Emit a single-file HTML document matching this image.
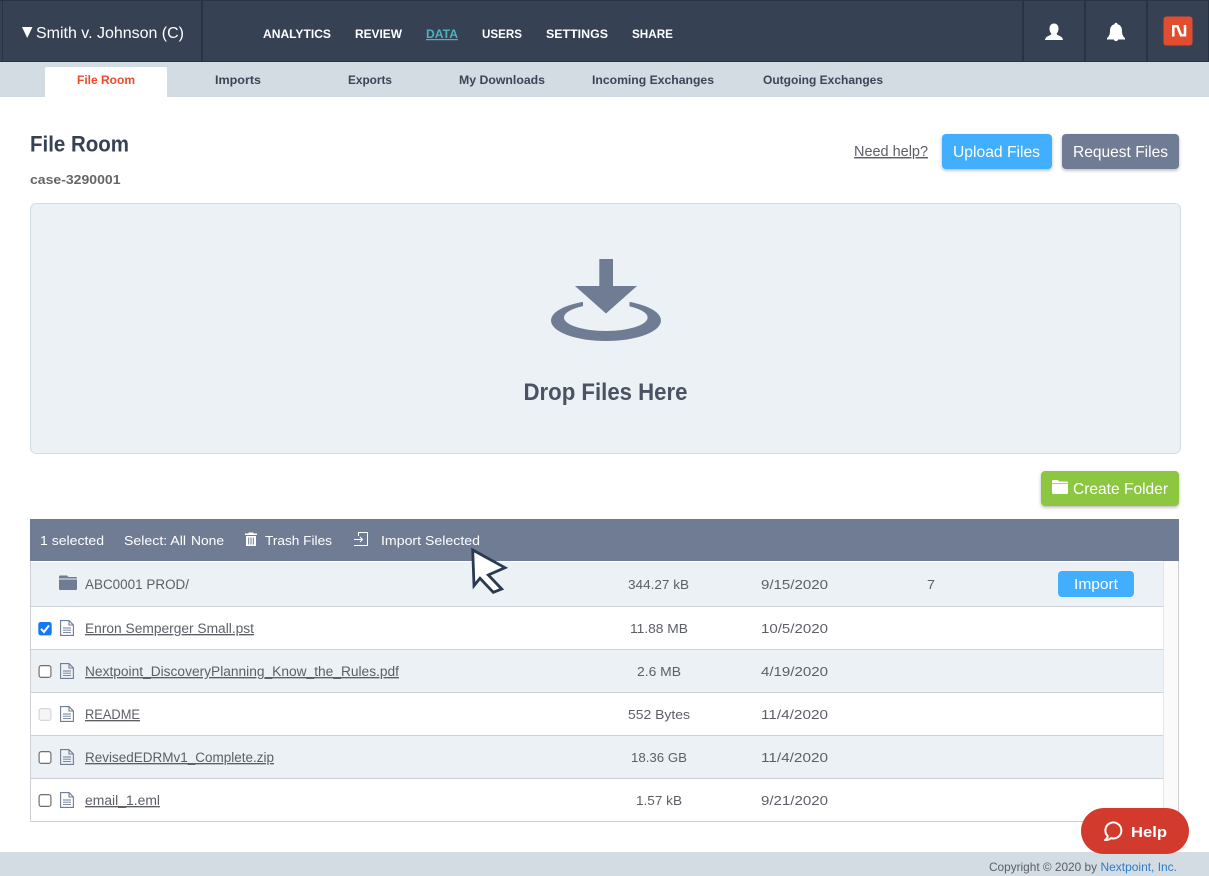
<!DOCTYPE html>
<html lang="en"><head><meta charset="utf-8"><title>File Room</title>
<style>
html,body{margin:0;padding:0;background:#fff;overflow:hidden}
svg{display:block;font-family:"Liberation Sans",sans-serif}
.n{font-size:12px;font-weight:700;fill:#fff}
.t{font-size:12px;font-weight:700;fill:#3b4557}
.b{font-size:16px;fill:#fff}
.w{font-size:13px;fill:#fff}
.r{font-size:13.5px;fill:#5c5f66}
.u{text-decoration:underline}
.c{font-size:13px;fill:#5c5f66}
</style></head><body>
<svg width="1209" height="876" viewBox="0 0 1209 876" xmlns="http://www.w3.org/2000/svg">
<defs>
<filter id="s" x="-10%" y="-20%" width="120%" height="150%"><feDropShadow dx="0" dy="1.5" stdDeviation="1.5" flood-color="#000" flood-opacity=".28"/></filter>
<g id="doc" fill="none" stroke="#6f7c94" stroke-width="1.1"><path d="M.6.6H9L13.4 5V15.4H.6Z"/><path d="M9 .6V5H13.4"/><path d="M3 8H11M3 10.2H11M3 12.4H11" stroke-width=".9"/></g>
<g id="cb"><rect x=".6" y=".6" width="11.8" height="11.8" rx="2.2" fill="#fff" stroke="#6f6f6f" stroke-width="1.2"/></g>
</defs>

<!-- header -->
<rect width="1209" height="62" fill="#364154"/>
<rect width="1209" height="1" fill="#2a3344"/>
<rect y="61" width="1209" height="1" fill="#2a3344"/>
<g fill="#2a3344"><rect x="2" width="1" height="61"/><rect x="201" width="2" height="61"/><rect x="1022" width="2" height="61"/><rect x="1084" width="2" height="61"/><rect x="1146" width="2" height="61"/><rect x="1208" width="1" height="61"/></g>
<path d="M22 27H32.500L27.200 38Z" fill="#fff"/>
<text x="36" y="38" font-size="16" fill="#fff" textLength="148" lengthAdjust="spacingAndGlyphs">Smith v. Johnson (C)</text>
<text class="n" x="263" y="38" textLength="68" lengthAdjust="spacingAndGlyphs">ANALYTICS</text>
<text class="n" x="355" y="38" textLength="47" lengthAdjust="spacingAndGlyphs">REVIEW</text>
<text class="n u" x="426" y="38" textLength="32" lengthAdjust="spacingAndGlyphs" style="fill:#4fb3bf">DATA</text>
<text class="n" x="482" y="38" textLength="40" lengthAdjust="spacingAndGlyphs">USERS</text>
<text class="n" x="546" y="38" textLength="62" lengthAdjust="spacingAndGlyphs">SETTINGS</text>
<text class="n" x="632" y="38" textLength="41" lengthAdjust="spacingAndGlyphs">SHARE</text>
<!-- person -->
<path d="M1054 23.500c3 0 4.500 2.300 4.500 5.200 0 2.200-.9 3.900-1.900 5 .2.900 1 1.400 2.500 2 1.900.7 3.500 1.600 3.900 4.300h-18c.4-2.700 2-3.600 3.900-4.300 1.500-.6 2.300-1.100 2.500-2-1-1.100-1.900-2.800-1.900-5 0-2.900 1.500-5.200 4.500-5.200Z" fill="#fff"/>
<!-- bell -->
<path d="M1116 22.700c1 0 1.500.7 1.500 1.500 3.100.8 4.500 3.200 4.500 6.500 0 4.200 1.100 5.700 3 7.300v1.500h-18v-1.500c1.900-1.600 3-3.100 3-7.300 0-3.300 1.400-5.700 4.500-6.500 0-.8.500-1.500 1.500-1.500ZM1113.800 39.500h4.400c-.2 1-1 1.600-2.200 1.600s-2-.6-2.200-1.600Z" fill="#fff"/>
<!-- logo -->
<rect x="1163.500" y="16.500" width="29" height="29" rx="3" fill="#e24d2f"/>
<path d="M1173.300 36.500V26.300H1177.500L1181 35.200H1185V25" fill="none" stroke="#fff" stroke-width="2.500"/>

<!-- tabs -->
<rect y="62" width="1209" height="35" fill="#d3dbe3"/>
<path d="M45 97V69a2 2 0 0 1 2-2H165a2 2 0 0 1 2 2V97Z" fill="#fff"/>
<text class="t" x="77" y="84" textLength="58" lengthAdjust="spacingAndGlyphs" style="fill:#ee4a2c">File Room</text>
<text class="t" x="215" y="84" textLength="46" lengthAdjust="spacingAndGlyphs">Imports</text>
<text class="t" x="348" y="84" textLength="44" lengthAdjust="spacingAndGlyphs">Exports</text>
<text class="t" x="459" y="84" textLength="86" lengthAdjust="spacingAndGlyphs">My Downloads</text>
<text class="t" x="592" y="84" textLength="122" lengthAdjust="spacingAndGlyphs">Incoming Exchanges</text>
<text class="t" x="763" y="84" textLength="120" lengthAdjust="spacingAndGlyphs">Outgoing Exchanges</text>

<!-- title -->
<text x="30" y="151.500" font-size="22" font-weight="700" fill="#364154" textLength="99" lengthAdjust="spacingAndGlyphs">File Room</text>
<text x="30" y="184" font-size="13" font-weight="700" fill="#666" textLength="90.500" lengthAdjust="spacingAndGlyphs">case-3290001</text>
<text class="u" x="854" y="156" font-size="14.500" fill="#5c5f66" textLength="74" lengthAdjust="spacingAndGlyphs">Need help?</text>
<rect x="942" y="134" width="110" height="35" rx="4" fill="#42aefe" filter="url(#s)"/>
<text class="b" x="953" y="157" textLength="87" lengthAdjust="spacingAndGlyphs">Upload Files</text>
<rect x="1062" y="134" width="117" height="35" rx="4" fill="#6f7c94" filter="url(#s)"/>
<text class="b" x="1073" y="157" textLength="95" lengthAdjust="spacingAndGlyphs">Request Files</text>

<!-- drop zone -->
<rect x="30.500" y="203.500" width="1150" height="250" rx="6" fill="#ecf1f6" stroke="#d3dbe3"/>
<path fill-rule="evenodd" d="M551 320.500A55 20.500 0 1 0 661 320.500A55 20.500 0 1 0 551 320.500ZM564 317.500A41.800 13.500 0 1 1 647.600 317.500A41.800 13.500 0 1 1 564 317.500Z" fill="#6f7c94"/>
<rect x="583" y="294" width="46.500" height="16" fill="#ecf1f6"/>
<path d="M599.300 259H613V286H637L606 313.500 575 286H599.300Z" fill="#6f7c94"/>
<text x="523.500" y="400" font-size="24" font-weight="700" fill="#4b5262" textLength="164" lengthAdjust="spacingAndGlyphs">Drop Files Here</text>

<!-- create folder -->
<rect x="1041" y="471" width="138" height="35" rx="4" fill="#8dc63f" filter="url(#s)"/>
<path d="M1052 482.500V481.500a1.500 1.500 0 0 1 1.500-1.500H1058l1 1.500H1066.500a1.500 1.500 0 0 1 1.500 1.500H1052ZM1052 483.800H1068V492.500a1.500 1.500 0 0 1-1.500 1.500H1053.500a1.500 1.500 0 0 1-1.500-1.500Z" fill="#fff"/>
<text class="b" x="1073" y="494" textLength="95" lengthAdjust="spacingAndGlyphs">Create Folder</text>

<!-- toolbar -->
<rect x="30" y="519" width="1149" height="42" fill="#6f7c94"/>
<text class="w" x="40" y="545" textLength="64" lengthAdjust="spacingAndGlyphs">1 selected</text>
<text class="w" x="124" y="545" textLength="62" lengthAdjust="spacingAndGlyphs">Select: All</text>
<text class="w" x="191" y="545" textLength="33" lengthAdjust="spacingAndGlyphs">None</text>
<path d="M248.500 533.500V532.500H253.500V533.500H257V535H245V533.500ZM246 536H256V546H246ZM248.200 537.500V544.500H249.200V537.500ZM250.500 537.500V544.500H251.500V537.500ZM252.800 537.500V544.500H253.800V537.500Z" fill="#fff" fill-rule="evenodd"/>
<text class="w" x="265" y="545" textLength="67" lengthAdjust="spacingAndGlyphs">Trash Files</text>
<path d="M358.500 536V532.500H367.500V545.500H358M354 539.500H362.500M360 537L362.500 539.500 360 542M354 545.500H358" fill="none" stroke="#fff" stroke-width="1"/>
<text class="w" x="381" y="545" textLength="99" lengthAdjust="spacingAndGlyphs">Import Selected</text>

<!-- table -->
<rect x="30" y="561" width="1149" height="261" fill="#fff"/>
<rect x="31" y="562" width="1133" height="44" fill="#ecf1f6"/>
<rect x="31" y="650" width="1133" height="42" fill="#ecf1f6"/>
<rect x="31" y="736" width="1133" height="42" fill="#ecf1f6"/>
<rect x="1164" y="561" width="14" height="261" fill="#fafafa"/>
<g fill="#cdd0d4">
<rect x="31" y="606" width="1133" height="1"/><rect x="31" y="649" width="1133" height="1"/><rect x="31" y="692" width="1133" height="1"/><rect x="31" y="735" width="1133" height="1"/><rect x="31" y="778" width="1133" height="1"/>
<rect x="30" y="821" width="1149" height="1"/><rect x="30" y="561" width="1" height="261"/><rect x="1178" y="561" width="1" height="261"/><rect x="1163" y="561" width="1" height="261" fill="#e4e6e8"/>
</g>

<!-- row 1 -->
<path d="M59 578V576.500a1 1 0 0 1 1-1H67l1.500 1.500H76a1 1 0 0 1 1 1V578.500H59ZM59 579.500H77V589a1 1 0 0 1-1 1H60a1 1 0 0 1-1-1Z" fill="#6f7c94"/>
<text class="r" x="85" y="589" textLength="104" lengthAdjust="spacingAndGlyphs">ABC0001 PROD/</text>
<text class="c" x="628" y="589" textLength="61" lengthAdjust="spacingAndGlyphs">344.27 kB</text>
<text class="c" x="761" y="589" textLength="67" lengthAdjust="spacingAndGlyphs">9/15/2020</text>
<text class="c" x="927" y="589" textLength="8" lengthAdjust="spacingAndGlyphs">7</text>
<rect x="1058" y="571" width="76" height="26" rx="4" fill="#42aefe"/>
<text x="1074" y="589" font-size="14.500" fill="#fff" textLength="44" lengthAdjust="spacingAndGlyphs">Import</text>

<!-- row 2 -->
<rect x="38.300" y="622" width="13.400" height="13.400" rx="2.400" fill="#1677f2"/>
<path d="M41 628.800L44 632 49 625.500" fill="none" stroke="#fff" stroke-width="2"/>
<use href="#doc" x="60" y="620"/>
<text class="r u" x="85" y="633" textLength="169" lengthAdjust="spacingAndGlyphs">Enron Semperger Small.pst</text>
<text class="c" x="630" y="633" textLength="58" lengthAdjust="spacingAndGlyphs">11.88 MB</text>
<text class="c" x="761" y="633" textLength="67" lengthAdjust="spacingAndGlyphs">10/5/2020</text>

<!-- row 3 -->
<use href="#cb" x="38.500" y="665"/>
<use href="#doc" x="60" y="663"/>
<text class="r u" x="85" y="676" textLength="314" lengthAdjust="spacingAndGlyphs">Nextpoint_DiscoveryPlanning_Know_the_Rules.pdf</text>
<text class="c" x="637" y="676" textLength="44" lengthAdjust="spacingAndGlyphs">2.6 MB</text>
<text class="c" x="761" y="676" textLength="67" lengthAdjust="spacingAndGlyphs">4/19/2020</text>

<!-- row 4 -->
<rect x="39.100" y="708.600" width="11.800" height="11.800" rx="2.200" fill="#f5f5f5" stroke="#d6d6d6" stroke-width="1.200"/>
<use href="#doc" x="60" y="706"/>
<text class="r u" x="85" y="719" textLength="55" lengthAdjust="spacingAndGlyphs">README</text>
<text class="c" x="628" y="719" textLength="62" lengthAdjust="spacingAndGlyphs">552 Bytes</text>
<text class="c" x="761" y="719" textLength="67" lengthAdjust="spacingAndGlyphs">11/4/2020</text>

<!-- row 5 -->
<use href="#cb" x="38.500" y="751"/>
<use href="#doc" x="60" y="749"/>
<text class="r u" x="85" y="762" textLength="189" lengthAdjust="spacingAndGlyphs">RevisedEDRMv1_Complete.zip</text>
<text class="c" x="631" y="762" textLength="56" lengthAdjust="spacingAndGlyphs">18.36 GB</text>
<text class="c" x="761" y="762" textLength="67" lengthAdjust="spacingAndGlyphs">11/4/2020</text>

<!-- row 6 -->
<use href="#cb" x="38.500" y="794"/>
<use href="#doc" x="60" y="792"/>
<text class="r u" x="85" y="805" textLength="75" lengthAdjust="spacingAndGlyphs">email_1.eml</text>
<text class="c" x="636" y="805" textLength="46" lengthAdjust="spacingAndGlyphs">1.57 kB</text>
<text class="c" x="761" y="805" textLength="67" lengthAdjust="spacingAndGlyphs">9/21/2020</text>

<!-- cursor -->
<path d="M472.700 550L505 567.700 488.300 575 501.700 589 493.300 592.300 480 578.300 474 585.700Z" fill="#fff" stroke="#2c3a50" stroke-width="2.800" stroke-linejoin="miter"/>

<!-- footer -->
<rect y="852" width="1209" height="24" fill="#d3dbe3"/>
<text x="989" y="871" font-size="12" fill="#5c5f66" textLength="108" lengthAdjust="spacingAndGlyphs">Copyright © 2020 by</text>
<text x="1100.500" y="871" font-size="12" fill="#2f7cc4" textLength="76.500" lengthAdjust="spacingAndGlyphs">Nextpoint, Inc.</text>

<!-- help -->
<rect x="1081" y="808" width="108" height="46" rx="23" fill="#d23a2e"/>
<path d="M1107.800 836.200A8 8 0 1 1 1111 838.100C1109.500 839.500 1107.500 840 1105 840C1106.500 839 1107.500 837.800 1107.800 836.200Z" fill="none" stroke="#fff" stroke-width="2" stroke-linejoin="round"/>
<text x="1131" y="837" font-size="15" font-weight="700" fill="#fff" textLength="36" lengthAdjust="spacingAndGlyphs">Help</text>
</svg>
</body></html>
